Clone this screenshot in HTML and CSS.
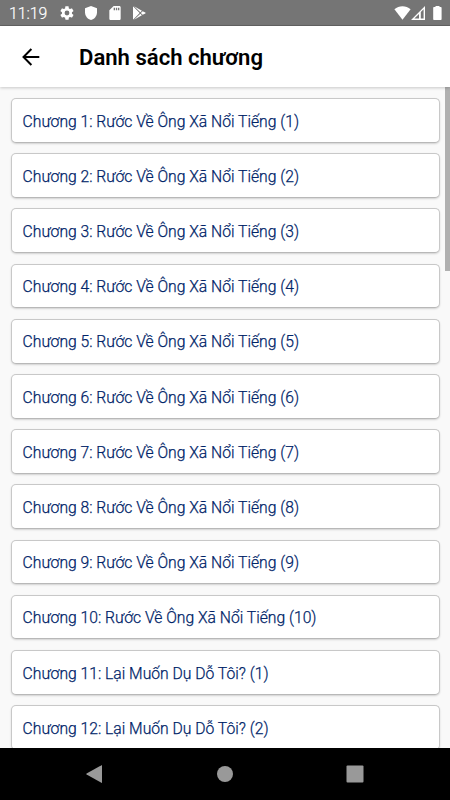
FILE: index.html
```html
<!DOCTYPE html>
<html lang="vi">

<head>
    <meta charset="UTF-8">
    <title>Danh sách chương</title>
    <link rel="stylesheet" href="styles.css">
</head>

<body>
    <div class="screen">
        <div class="status-bar">
            <span class="time">11:19</span>
            <div class="status-left">
                <svg width="16" height="16" viewBox="0 0 24 24"><path fill="#fff" d="M19.4 13a7.8 7.8 0 0 0 0-2l2.1-1.6c.2-.2.3-.4.1-.7l-2-3.4c-.1-.2-.4-.3-.6-.2l-2.5 1a7 7 0 0 0-1.7-1l-.4-2.6c0-.3-.2-.5-.4-.5h-4c-.3 0-.5.2-.5.4L9.1 5.1a7 7 0 0 0-1.7 1l-2.5-1c-.2-.1-.5 0-.6.2l-2 3.4c-.1.2-.1.5.1.6L4.5 11a7.8 7.8 0 0 0 0 2l-2.1 1.6c-.2.2-.2.4-.1.7l2 3.4c.1.2.4.3.6.2l2.5-1c.5.4 1.1.8 1.7 1l.4 2.6c0 .3.2.5.5.5h4c.2 0 .4-.2.4-.4l.4-2.7a7 7 0 0 0 1.7-1l2.5 1c.2.1.5 0 .6-.2l2-3.4c.1-.2.1-.5-.1-.6zM12 15.6a3.6 3.6 0 1 1 0-7.2 3.6 3.6 0 0 1 0 7.2z"/></svg>
                <svg width="16" height="16" viewBox="0 0 24 24"><path fill="#fff" d="M12 1.5L3 5v6c0 5.5 3.8 10.4 9 11.5 5.2-1.1 9-6 9-11.5V5z"/></svg>
                <svg width="16" height="16" viewBox="0 0 24 24"><path fill="#fff" d="M18.5 1.5H10L3.5 8v12.5c0 1.1.9 2 2 2h13c1.1 0 2-.9 2-2v-17c0-1.1-.9-2-2-2zM12 8h-2V4h2zm3.3 0h-2V4h2zm3.2 0h-2V4h2z"/></svg>
                <svg width="16" height="16" viewBox="0 0 24 24"><path fill="#fff" d="M3 3.5v17c0 .5.1.8.4 1.1L13 12 3.4 2.4c-.3.3-.4.6-.4 1.1zM4.6 1.8L14 11l2.4-2.4zM4.6 22.2L14 13l2.4 2.4zM17.5 9.2L14.8 12l2.7 2.8 4-2.2c.6-.4.6-.8 0-1.2z"/></svg>
            </div>
            <div class="status-right">
                <svg width="17" height="14" viewBox="0 0 17 14"><path fill="#fff" d="M.4 3.3C5-.9 12-.9 16.6 3.3L8.5 13.7z"/></svg>
                <svg width="14" height="14" viewBox="0 0 14 14"><path fill="#fff" fill-rule="evenodd" d="M14 0v14H0zM12.6 3.3L9.8 6.1v6.5h2.8zM8 8l-4.6 4.6H8z"/></svg>
                <svg class="battery" width="9" height="14" viewBox="0 0 9 14"><path fill="#fff" d="M2.5 0h4v1.1h1.1c.6 0 1 .4 1 1v10.9c0 .6-.4 1-1 1H1.200c-.6 0-1-.4-1-1V2.100c0-.6.4-1 1-1h1.300z"/></svg>
            </div>
        </div>

        <div class="header">
            <svg width="18" height="18" viewBox="0 0 18 18"><path fill="none" stroke="#000" stroke-width="2" d="M17.3 9H1.5M9.4 1L1.5 9l7.9 8"/></svg>
            <h1 class="title">Danh sách chương</h1>
        </div>

        <div class="content">
            <ul class="chapters">
                <li>Chương 1: Rước Về Ông Xã Nổi Tiếng (1)</li>
                <li>Chương 2: Rước Về Ông Xã Nổi Tiếng (2)</li>
                <li>Chương 3: Rước Về Ông Xã Nổi Tiếng (3)</li>
                <li>Chương 4: Rước Về Ông Xã Nổi Tiếng (4)</li>
                <li>Chương 5: Rước Về Ông Xã Nổi Tiếng (5)</li>
                <li>Chương 6: Rước Về Ông Xã Nổi Tiếng (6)</li>
                <li>Chương 7: Rước Về Ông Xã Nổi Tiếng (7)</li>
                <li>Chương 8: Rước Về Ông Xã Nổi Tiếng (8)</li>
                <li>Chương 9: Rước Về Ông Xã Nổi Tiếng (9)</li>
                <li>Chương 10: Rước Về Ông Xã Nổi Tiếng (10)</li>
                <li>Chương 11: Lại Muốn Dụ Dỗ Tôi? (1)</li>
                <li>Chương 12: Lại Muốn Dụ Dỗ Tôi? (2)</li>
            </ul>
            <div class="scroll-thumb"></div>
        </div>

        <div class="nav-bar">
            <svg width="18" height="18" viewBox="0 0 18 18"><path fill="#999" d="M16 .5v17q0 .6-.6.3L.6 9.500Q0 9 .6 8.500L15.400.2q.6-.3.600.3z"/></svg>
            <svg width="18" height="18" viewBox="0 0 18 18"><circle cx="9" cy="9" r="8" fill="#999"/></svg>
            <svg width="18" height="18" viewBox="0 0 18 18"><rect x=".5" y=".5" width="17" height="17" rx="1" fill="#999"/></svg>
        </div>
    </div>
</body>

</html>
```
FILE: styles.css
```css
*{
    box-sizing: border-box;
}
body{
    margin: 0;
    font-family: Roboto, "Noto Sans", sans-serif;
}
svg{
    display: block;
    flex: none;
}
.screen{
    display: flex;
    flex-direction: column;
    width: 450px;
    height: 800px;
    overflow: hidden;
    background: #f9f9f9;
}

.status-bar{
    display: flex;
    align-items: center;
    flex: none;
    height: 26px;
    padding: 1px 8px 0 9px;
    background: #757575;
    border-bottom: 1px solid #636363;
    color: #fff;
}
.time{
    width: 50px;
    padding-top: 1px;
    font-size: 15.8px;
    font-weight: 300;
    line-height: 24px;
    -webkit-text-stroke: 0.2px #fff;
}
.status-left{
    display: flex;
    gap: 8px;
}
.status-right{
    display: flex;
    align-items: center;
    margin-left: auto;
}
.battery{
    margin-left: 8px;
}

.header{
    display: flex;
    align-items: center;
    flex: none;
    position: relative;
    height: 61px;
    padding: 1px 22px 0;
    background: #fff;
    box-shadow: 0 1px 3px rgba(0, 0, 0, 0.2);
}
.title{
    margin: 0 0 0 39px;
    font-size: 22.1px;
    font-weight: 600;
    line-height: 28px;
    color: #000;
}

.content{
    display: flex;
    flex: 1;
    min-height: 0;
    overflow: hidden;
}
.chapters{
    display: flex;
    flex-direction: column;
    flex: 1;
    gap: 10.4px;
    margin: 0;
    padding: 11px 5px 0 11px;
    list-style: none;
}
.chapters li{
    flex: none;
    height: 44.8px;
    padding: 0.7px 11px 0 10.6px;
    border: 1px solid #c8c8c8;
    border-bottom-color: #b8b8b8;
    border-radius: 5px;
    background: #fff;
    box-shadow: 0 1px 2px rgba(0, 0, 0, 0.16);
    font-size: 15.7px;
    font-weight: 300;
    line-height: 44px;
    color: #002468;
    -webkit-text-stroke: 0.25px #002468;
}
.scroll-thumb{
    flex: none;
    width: 5px;
    height: 184px;
    background: #b0b0b0;
}

.nav-bar{
    display: flex;
    align-items: center;
    justify-content: space-between;
    flex: none;
    height: 52px;
    padding: 0 86px;
    background: #000;
}
```
